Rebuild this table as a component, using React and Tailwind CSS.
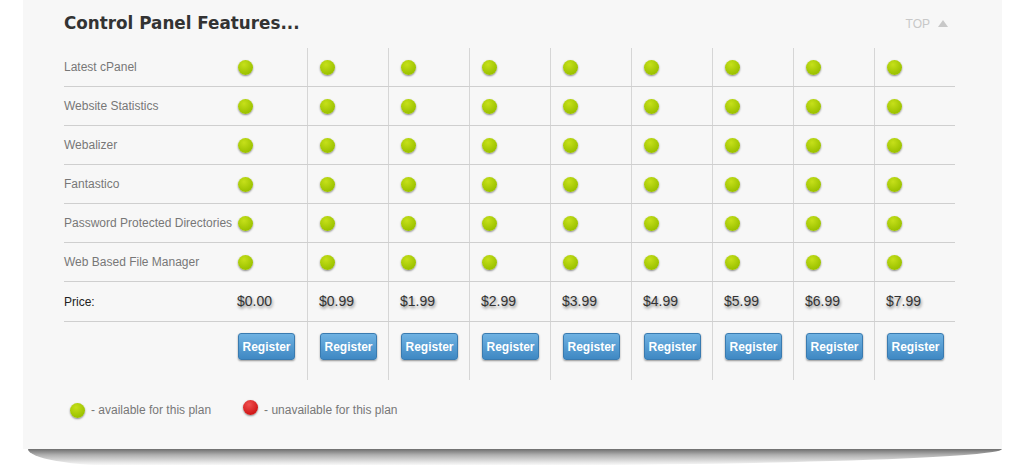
import React from 'react';

const features = [
    'Latest cPanel',
    'Website Statistics',
    'Webalizer',
    'Fantastico',
    'Password Protected Directories',
    'Web Based File Manager',
];

const prices = ['$0.00', '$0.99', '$1.99', '$2.99', '$3.99', '$4.99', '$5.99', '$6.99', '$7.99'];

const Dot = ({ red }) => (
    <span
        className={`inline-block h-[15px] w-[15px] rounded-full shadow-[0_1px_2px_rgba(0,0,0,0.45)] ${
            red
                ? 'bg-[radial-gradient(circle_at_40%_30%,#f05050,#d01818_70%)]'
                : 'bg-[radial-gradient(circle_at_40%_30%,#c6e01a,#9cc200_70%)]'
        }`}
    />
);

const App = () => {
    return (
        <div className="min-h-[465px] w-[1014px] bg-white font-['Liberation_Sans',Arial,sans-serif]">
            <div className="mx-[23px] w-[979px] bg-[#f7f7f7] pt-[11px] pb-[29px]">
                <div className="flex items-center justify-between pl-[41px] pr-[54px]">
                    <h2 className="font-['DejaVu_Sans',sans-serif] text-[16.8px] font-bold text-[#333]">
                        Control Panel Features...
                    </h2>
                    <div className="flex items-center gap-[8px] text-[12px] text-[#c8c8c8]">
                        TOP
                        <span className="h-0 w-0 border-x-[5px] border-b-[7px] border-x-transparent border-b-[#c8c8c8]" />
                    </div>
                </div>

                <div className="mt-[12px] ml-[41px] w-[891px]">
                    {features.map((f) => (
                        <div key={f} className="flex h-[39px] border-b border-[#cfcfcf]">
                            <div className="flex w-[162px] items-center whitespace-nowrap text-[12px] text-[#777]">{f}</div>
                            {prices.map((p, i) => (
                                <div
                                    key={p}
                                    className={`flex w-[81px] items-center pl-[12px] ${i > 0 ? 'border-l border-[#d6d6d6]' : ''}`}
                                >
                                    <Dot />
                                </div>
                            ))}
                        </div>
                    ))}
                    <div className="flex h-[40px] border-b border-[#cfcfcf]">
                        <div className="flex w-[162px] items-center text-[12px] text-[#222]">Price:</div>
                        {prices.map((p, i) => (
                            <div
                                key={p}
                                className={`flex w-[81px] items-center pl-[11px] text-[14px] text-[#333] [text-shadow:1px_2px_3px_rgba(0,0,0,0.45)] ${i > 0 ? 'border-l border-[#d6d6d6]' : ''}`}
                            >
                                {p}
                            </div>
                        ))}
                    </div>
                    <div className="flex h-[58px]">
                        <div className="w-[162px]" />
                        {prices.map((p, i) => (
                            <div
                                key={p}
                                className={`w-[81px] pt-[11px] pl-[12px] ${i > 0 ? 'border-l border-[#d6d6d6]' : ''}`}
                            >
                                <button className="h-[27px] w-[57px] rounded-[3px] border border-[#3a7bb0] bg-[linear-gradient(#6fb2e2,#3f88c3)] text-[12px] font-bold text-white shadow-[0_1px_2px_rgba(0,0,0,0.4)]">
                                    Register
                                </button>
                            </div>
                        ))}
                    </div>
                </div>

                <div className="mt-[20px] flex items-center pl-[47px] text-[12px] text-[#777]">
                    <Dot />
                    <span className="ml-[6px]">- available for this plan</span>
                    <span className="ml-[32px]"><Dot red /></span>
                    <span className="ml-[6px]">- unavailable for this plan</span>
                </div>
            </div>
            <div className="ml-[28px] h-[17px] w-[974px] rounded-bl-[10%_100%] rounded-br-[60%_100%] bg-[linear-gradient(#6e6e6e,#b0b0b0_35%,#e8e8e8_80%,#fff)]" />
        </div>
    );
};

export default App;
